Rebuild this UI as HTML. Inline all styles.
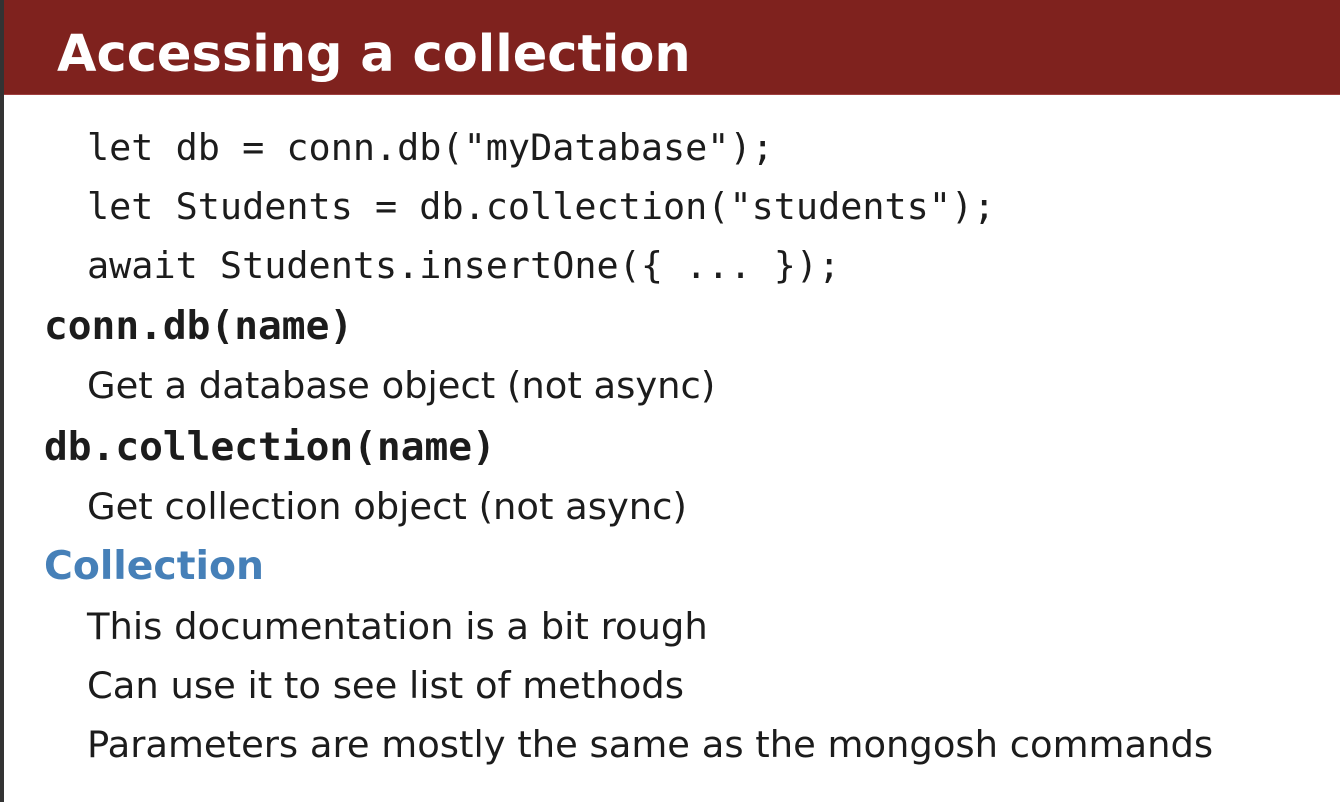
<!DOCTYPE html>
<html><head><meta charset="utf-8"><style>
html,body{margin:0;padding:0;}
body{width:1340px;height:802px;background:#fff;position:relative;overflow:hidden;font-family:"DejaVu Sans","Liberation Sans",sans-serif;color:#1c1c1c;}
.bar{position:absolute;left:0;top:0;width:4px;height:802px;background:#333;}
.hdr{position:absolute;left:4px;top:0;width:1336px;height:94px;background:#7f221e;border-bottom:1px solid #a04040;}
.title{position:absolute;left:57px;top:25px;font-weight:bold;font-size:51px;line-height:60px;color:#fff;white-space:nowrap;}
.l{position:absolute;white-space:nowrap;line-height:60px;}
.code{font-family:"DejaVu Sans Mono","Liberation Mono",monospace;font-size:36.8px;left:87px;}
.h{font-family:"DejaVu Sans Mono","Liberation Mono",monospace;font-weight:bold;font-size:39.5px;left:44px;}
.t{font-size:36.9px;left:87px;}
.blue{font-weight:bold;font-size:39.3px;left:44px;color:#4680b8;}
</style></head><body>
<div class="bar"></div>
<div class="hdr"></div>
<div class="title">Accessing a collection</div>
<div class="l code" style="top:118px">let db = conn.db("myDatabase");</div>
<div class="l code" style="top:177px">let Students = db.collection("students");</div>
<div class="l code" style="top:236px">await Students.insertOne({ ... });</div>
<div class="l h" style="top:296px">conn.db(name)</div>
<div class="l t" style="top:356px">Get a database object (not async)</div>
<div class="l h" style="top:417px">db.collection(name)</div>
<div class="l t" style="top:477px">Get collection object (not async)</div>
<div class="l blue" style="top:537px">Collection</div>
<div class="l t" style="top:597px">This documentation is a bit rough</div>
<div class="l t" style="top:656px">Can use it to see list of methods</div>
<div class="l t" style="top:715px">Parameters are mostly the same as the mongosh commands</div>
</body></html>
